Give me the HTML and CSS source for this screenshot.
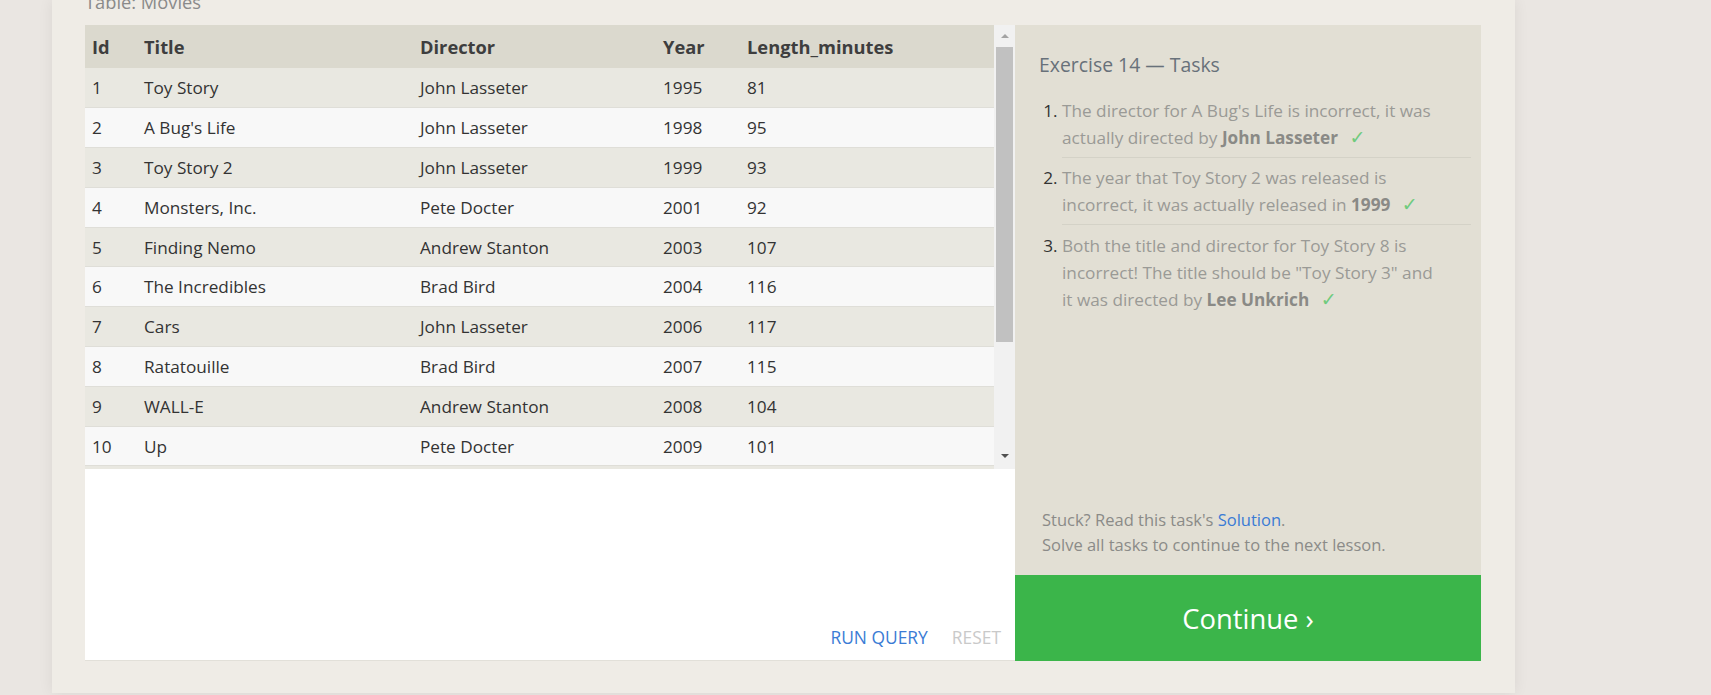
FILE: index.html
```html
<!DOCTYPE html>
<html lang="en">
<head>
<meta charset="utf-8">
<title>SQL Lesson 14 — Movies</title>
<link rel="stylesheet" href="styles.css">
</head>
<body>
<div class="panel">
  <div class="table-label">Table: Movies</div>
  <div class="exercise">
    <div class="work">
      <div class="results">
        <div class="table-wrap">
          <table class="grid">
            <colgroup>
              <col class="c-id"><col class="c-title"><col class="c-director"><col class="c-year"><col>
            </colgroup>
            <thead>
              <tr><th>Id</th><th>Title</th><th>Director</th><th>Year</th><th>Length_minutes</th></tr>
            </thead>
            <tbody>
              <tr><td>1</td><td>Toy Story</td><td>John Lasseter</td><td>1995</td><td>81</td></tr>
              <tr><td>2</td><td>A Bug's Life</td><td>John Lasseter</td><td>1998</td><td>95</td></tr>
              <tr><td>3</td><td>Toy Story 2</td><td>John Lasseter</td><td>1999</td><td>93</td></tr>
              <tr><td>4</td><td>Monsters, Inc.</td><td>Pete Docter</td><td>2001</td><td>92</td></tr>
              <tr><td>5</td><td>Finding Nemo</td><td>Andrew Stanton</td><td>2003</td><td>107</td></tr>
              <tr><td>6</td><td>The Incredibles</td><td>Brad Bird</td><td>2004</td><td>116</td></tr>
              <tr><td>7</td><td>Cars</td><td>John Lasseter</td><td>2006</td><td>117</td></tr>
              <tr><td>8</td><td>Ratatouille</td><td>Brad Bird</td><td>2007</td><td>115</td></tr>
              <tr><td>9</td><td>WALL-E</td><td>Andrew Stanton</td><td>2008</td><td>104</td></tr>
              <tr><td>10</td><td>Up</td><td>Pete Docter</td><td>2009</td><td>101</td></tr>
            </tbody>
          </table>
        </div>
        <div class="scrollbar">
          <div class="sb-btn sb-up"><span class="tri tri-up"></span></div>
          <div class="sb-thumb"></div>
          <div class="sb-fill"></div>
          <div class="sb-btn sb-down"><span class="tri tri-down"></span></div>
        </div>
      </div>
      <div class="editor">
        <div class="editor-actions">
          <span class="btn-run">RUN QUERY</span>
          <span class="btn-reset">RESET</span>
        </div>
      </div>
    </div>
    <div class="tasks">
      <div class="tasks-body">
        <h3 class="tasks-title">Exercise 14 — Tasks</h3>
        <ol class="task-list">
          <li>The director for A Bug's Life is incorrect, it was actually directed by <strong>John Lasseter</strong> <span class="check">✓</span></li>
          <li>The year that Toy Story 2 was released is incorrect, it was actually released in <strong>1999</strong> <span class="check">✓</span></li>
          <li>Both the title and director for Toy Story 8 is incorrect! The title should be "Toy Story 3" and it&nbsp;was directed by <strong>Lee Unkrich</strong> <span class="check">✓</span></li>
        </ol>
      </div>
      <div class="stuck">
        <div>Stuck? Read this task's <span class="link">Solution</span>.</div>
        <div>Solve all tasks to continue to the next lesson.</div>
      </div>
      <div class="continue">Continue ›</div>
    </div>
  </div>
</div>
</body>
</html>
```

FILE: styles.css
```css
html, body {
  margin: 0;
  padding: 0;
}
body {
  background: #eae6e2;
  font-family: "Open Sans", "Noto Sans", "Liberation Sans", sans-serif;
  color: #333;
  height: 695px;
  overflow: hidden;
}
.panel {
  display: flex;
  flex-direction: column;
  margin-left: 52px;
  width: 1463px;
  height: 693px;
  box-sizing: border-box;
  background: #efece6;
  padding: 0 34px 32px 33px;
  box-shadow: 0 0 14px rgba(0, 0, 0, 0.07);
}
.table-label {
  margin-top: -10px;
  height: 24px;
  line-height: 24px;
  margin-bottom: 11px;
  font-size: 18.3px;
  color: #8a8a8a;
}
.exercise {
  display: flex;
  height: 636px;
}
.work {
  width: 930px;
  display: flex;
  flex-direction: column;
}
.results {
  display: flex;
  height: 444px;
  background: #e9e8e1;
}
.table-wrap {
  width: 909px;
  overflow: hidden;
}
.grid {
  width: 909px;
  table-layout: fixed;
  border-collapse: collapse;
  font-size: 17.2px;
}
.c-id { width: 52px; }
.c-title { width: 276px; }
.c-director { width: 243px; }
.c-year { width: 84px; }
.grid th {
  background: #dbd9ce;
  color: #3e3e3e;
  font-weight: 700;
  text-align: left;
  height: 43px;
  box-sizing: border-box;
  padding: 0 7px;
  font-size: 18.3px;
}
.grid td {
  height: 39.8px;
  box-sizing: border-box;
  padding: 0 7px;
  border-bottom: 1px solid #dfded8;
  color: #333;
  white-space: nowrap;
}
.grid tbody tr:nth-child(odd) td { background: #e9e8e1; }
.grid tbody tr:nth-child(even) td { background: #f8f8f8; }
.scrollbar {
  width: 21px;
  background: #f1f1f1;
  display: flex;
  flex-direction: column;
  align-items: center;
}
.sb-btn {
  width: 21px;
  height: 22px;
  box-sizing: border-box;
  display: flex;
  justify-content: center;
}
.sb-up { padding-top: 9px; }
.sb-down { padding-top: 7px; }
.tri {
  width: 0;
  height: 0;
  border-left: 4px solid transparent;
  border-right: 4px solid transparent;
}
.tri-up { border-bottom: 4px solid #a3a3a3; }
.tri-down { border-top: 4px solid #505050; }
.sb-thumb {
  width: 17px;
  height: 295px;
  background: #c1c1c1;
}
.sb-fill { flex: 1; }
.editor {
  flex: 1;
  background: #fff;
  border-bottom: 1px solid #e2e0d9;
  display: flex;
  flex-direction: column;
  justify-content: flex-end;
}
.editor-actions {
  display: flex;
  justify-content: flex-end;
  gap: 24px;
  padding: 0 14px 11px 0;
  font-size: 17.4px;
  line-height: 24px;
}
.btn-run { color: #3a7bd5; }
.btn-reset { color: #c9c9c9; }
.tasks {
  width: 466px;
  background: #e2dfd4;
  display: flex;
  flex-direction: column;
}
.tasks-body {
  padding: 28px 10px 0 24px;
}
.tasks-title {
  margin: 0;
  font-weight: 400;
  font-size: 19.4px;
  line-height: 24px;
  color: #68717a;
}
.task-list {
  margin: 13px 0 0 0;
  padding: 0 0 0 23px;
  font-size: 17.2px;
  line-height: 27.3px;
  color: #9a9a96;
}
.task-list li {
  padding: 6.5px 6px 5.5px 0;
  border-bottom: 1px solid #d4d2c7;
}
.task-list li:last-child { border-bottom: none; }
.task-list li::marker { color: #333; }
.task-list strong { color: #8a8a86; }
.check {
  color: #6fcb7d;
  margin-left: 7px;
  font-family: "DejaVu Sans", sans-serif;
  font-size: 19px;
  line-height: 1;
}
.stuck {
  margin-top: auto;
  padding: 0 0 18px 27px;
  font-size: 16.5px;
  line-height: 25px;
  color: #8b8b88;
}
.link { color: #3a7bd5; }
.continue {
  height: 86px;
  background: #3bb54a;
  color: #fff;
  font-size: 27.4px;
  display: flex;
  align-items: center;
  justify-content: center;
}
```
